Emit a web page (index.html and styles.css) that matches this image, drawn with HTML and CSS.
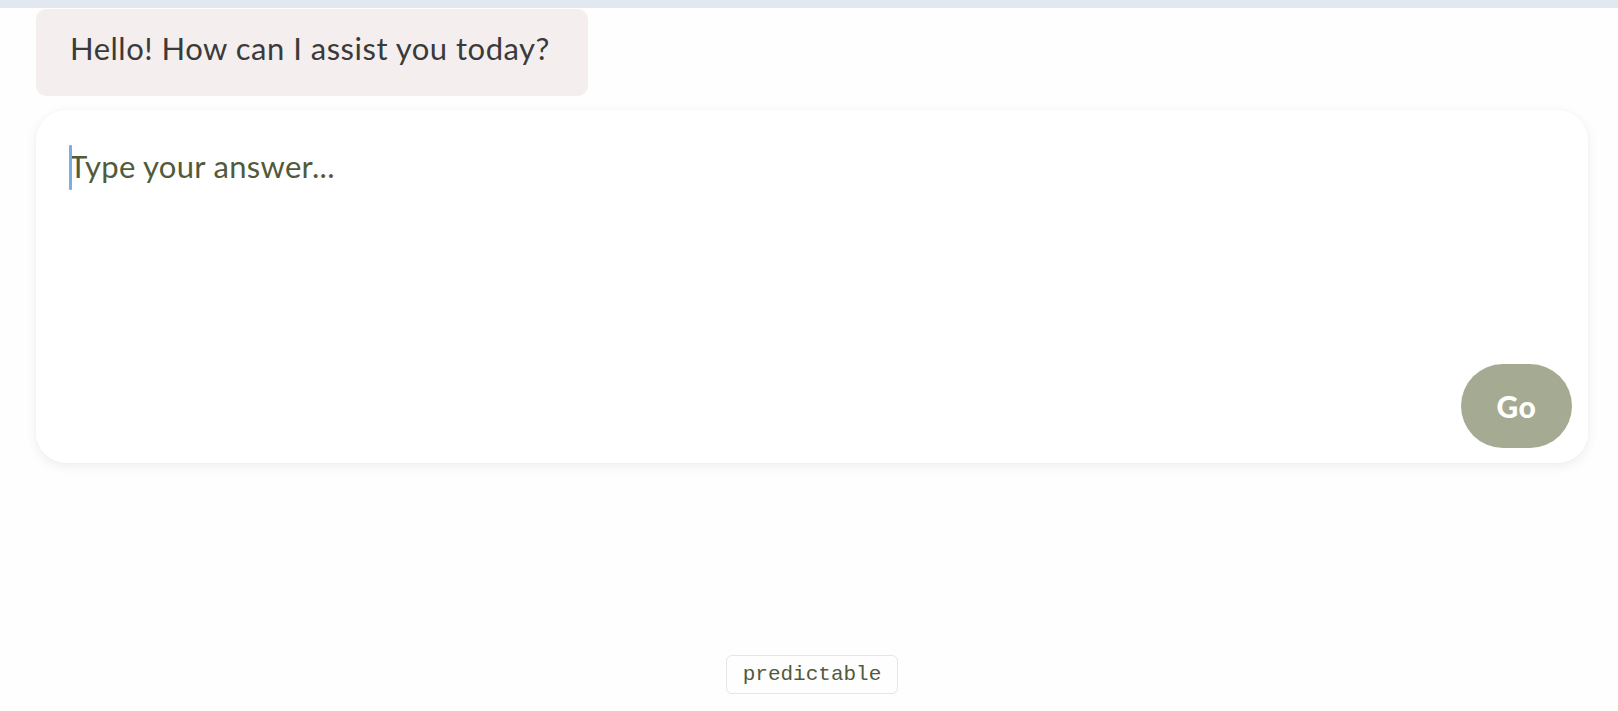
FILE: index.html
```html
<!DOCTYPE html>
<html lang="en">
<head>
<meta charset="utf-8">
<title>Chat</title>
<link rel="stylesheet" href="styles.css">
</head>
<body>
<div class="topbar"></div>
<main class="chat">
  <div class="bubble">Hello! How can I assist you today?</div>
  <form class="composer">
    <div class="input-row">
      <span class="caret"></span>
      <textarea class="answer" placeholder="Type your answer..."></textarea>
    </div>
    <div class="actions">
      <button type="button" class="go">Go</button>
    </div>
  </form>
</main>
<footer class="footer">
  <span class="tag">predictable</span>
</footer>
</body>
</html>
```
FILE: styles.css
```css
html, body {
  margin: 0;
  padding: 0;
  background: #fefefe;
  height: 100%;
}
body {
  font-family: "Lato", "Noto Sans", sans-serif;
  display: flex;
  flex-direction: column;
  overflow: hidden;
}
.topbar {
  height: 8px;
  background: #e2e8f0;
  flex: none;
}
.chat {
  padding: 1px 30px 0 36px;
  display: flex;
  flex-direction: column;
  align-items: flex-start;
}
.bubble {
  background: #f4efee;
  color: #3b3a3a;
  font-size: 31px;
  line-height: 40px;
  letter-spacing: 0.5px;
  padding: 19px 38px 28px 34px;
  border-radius: 10px;
}
.composer {
  margin-top: 14px;
  align-self: stretch;
  height: 353px;
  box-sizing: border-box;
  background: #ffffff;
  border-radius: 30px;
  box-shadow: 0 3px 12px rgba(0, 0, 0, 0.07), 0 0 2px rgba(0, 0, 0, 0.03);
  display: flex;
  flex-direction: column;
  padding: 36px 16px 15px 33px;
}
.input-row {
  flex: 1;
  display: flex;
  position: relative;
}
.caret {
  position: absolute;
  left: 0;
  top: -1px;
  width: 3px;
  height: 45px;
  background: #7aaee0;
  border-radius: 1px;
}
.answer {
  flex: 1;
  border: none;
  outline: none;
  resize: none;
  background: transparent;
  font-family: "Lato", "Noto Sans", sans-serif;
  font-size: 31px;
  line-height: 40px;
  letter-spacing: 0.3px;
  padding: 0;
  color: #4a5332;
}
.answer::placeholder {
  color: #525b39;
  opacity: 1;
}
.actions {
  display: flex;
  justify-content: flex-end;
}
.go {
  width: 111px;
  height: 84px;
  border: none;
  border-radius: 42px;
  background: #a4ab92;
  color: #ffffff;
  font-family: "Lato", "Noto Sans", sans-serif;
  font-weight: 900;
  font-size: 30px;
  letter-spacing: 0.5px;
  cursor: pointer;
}
.footer {
  margin-top: auto;
  display: flex;
  justify-content: center;
  padding-bottom: 17px;
}
.tag {
  font-family: "Liberation Mono", monospace;
  font-size: 21px;
  line-height: 25px;
  color: #515a3c;
  border: 1.5px solid #e6e6e6;
  border-radius: 6px;
  padding: 6px 16px;
  margin-left: 6px;
}
```
